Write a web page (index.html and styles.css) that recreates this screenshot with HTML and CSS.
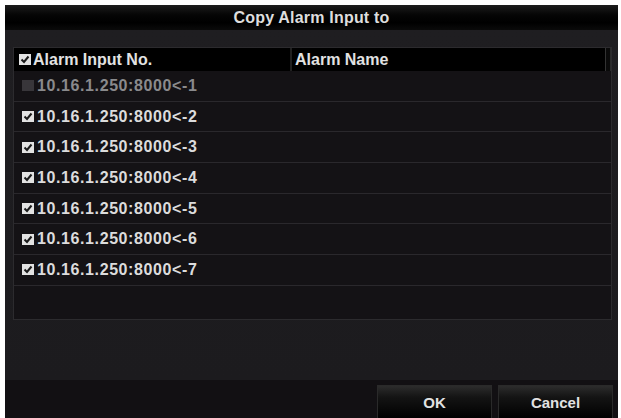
FILE: index.html
```html
<!DOCTYPE html>
<html>
<head>
<meta charset="utf-8">
<link rel="stylesheet" href="styles.css">
</head>
<body>
<div class="dialog">
  <div class="title">Copy Alarm Input to</div>
  <div class="content">
    <div class="table">
      <div class="thead">
        <div class="th c1"><span class="cb on"><svg viewBox="0 0 12 11" width="12" height="11"><rect width="12" height="11" fill="#e2e2e2"/><path d="M2.5 5.5 L5 8 L9.5 2.5" stroke="#1a1a1a" stroke-width="2" fill="none"/></svg></span>Alarm Input No.</div>
        <div class="th c2">Alarm Name</div>
        <div class="scroll"></div>
      </div>
      <div class="row dis"><span class="cb off"></span>10.16.1.250:8000&lt;-1</div>
      <div class="row"><span class="cb on"><svg viewBox="0 0 12 11" width="12" height="11"><rect width="12" height="11" fill="#e2e2e2"/><path d="M2.5 5.5 L5 8 L9.5 2.5" stroke="#1a1a1a" stroke-width="2" fill="none"/></svg></span>10.16.1.250:8000&lt;-2</div>
      <div class="row"><span class="cb on"><svg viewBox="0 0 12 11" width="12" height="11"><rect width="12" height="11" fill="#e2e2e2"/><path d="M2.5 5.5 L5 8 L9.5 2.5" stroke="#1a1a1a" stroke-width="2" fill="none"/></svg></span>10.16.1.250:8000&lt;-3</div>
      <div class="row"><span class="cb on"><svg viewBox="0 0 12 11" width="12" height="11"><rect width="12" height="11" fill="#e2e2e2"/><path d="M2.5 5.5 L5 8 L9.5 2.5" stroke="#1a1a1a" stroke-width="2" fill="none"/></svg></span>10.16.1.250:8000&lt;-4</div>
      <div class="row"><span class="cb on"><svg viewBox="0 0 12 11" width="12" height="11"><rect width="12" height="11" fill="#e2e2e2"/><path d="M2.5 5.5 L5 8 L9.5 2.5" stroke="#1a1a1a" stroke-width="2" fill="none"/></svg></span>10.16.1.250:8000&lt;-5</div>
      <div class="row"><span class="cb on"><svg viewBox="0 0 12 11" width="12" height="11"><rect width="12" height="11" fill="#e2e2e2"/><path d="M2.5 5.5 L5 8 L9.5 2.5" stroke="#1a1a1a" stroke-width="2" fill="none"/></svg></span>10.16.1.250:8000&lt;-6</div>
      <div class="row"><span class="cb on"><svg viewBox="0 0 12 11" width="12" height="11"><rect width="12" height="11" fill="#e2e2e2"/><path d="M2.5 5.5 L5 8 L9.5 2.5" stroke="#1a1a1a" stroke-width="2" fill="none"/></svg></span>10.16.1.250:8000&lt;-7</div>
    </div>
  </div>
  <div class="footer">
    <button class="btn">OK</button>
    <button class="btn">Cancel</button>
  </div>
</div>
</body>
</html>
```
FILE: styles.css
```css
html, body {
  margin: 0;
  padding: 0;
  background: #ffffff;
}
body {
  font-family: "Liberation Sans", Arial, sans-serif;
  font-weight: bold;
}
.dialog {
  margin: 5px 3px 0 5px;
  width: 613px;
  height: 413px;
  background: #1c1b1e;
  display: flex;
  flex-direction: column;
  overflow: hidden;
}
.title {
  height: 25px;
  flex: none;
  background: linear-gradient(#1c1c1c 0%, #050505 40%, #000 70%, #0a0a0a 100%);
  color: #dedede;
  font-size: 16px;
  text-align: center;
  line-height: 25px;
  letter-spacing: 0.2px;
}
.content {
  height: 350px;
  flex: none;
  padding: 17px 6px 0 8px;
  box-sizing: border-box;
  background: linear-gradient(#1f1e21, #1c1b1e);
}
.table {
  height: 273px;
  background: #141215;
  border: 1px solid #2c2b2e;
  box-sizing: border-box;
}
.thead {
  height: 23px;
  background: #000;
  display: flex;
  color: #e2e2e2;
  font-size: 16px;
}
.th {
  display: flex;
  align-items: center;
  height: 100%;
}
.c1 {
  width: 278px;
  padding-left: 5px;
  box-sizing: border-box;
  border-right: 2px solid #202020;
}
.c2 {
  flex: 1;
  padding-left: 3px;
}
.scroll {
  width: 6px;
  border-left: 1px solid #333;
  border-right: 1px solid #2a2a2a;
  box-sizing: border-box;
  background: #0a0a0a;
}
.cb {
  display: inline-block;
  width: 12px;
  height: 11px;
  margin-right: 2px;
  flex: none;
}
.cb svg {
  display: block;
}
.cb.off {
  background: #38363a;
}
.row .cb {
  margin-right: 3px;
}
.row {
  height: 30.7px;
  box-sizing: border-box;
  border-bottom: 1px solid #2a282c;
  display: flex;
  align-items: center;
  padding-left: 8px;
  color: #dcdcdc;
  font-size: 16px;
  letter-spacing: 0.6px;
}
.row.dis {
  color: #8a8a8c;
}
.footer {
  flex: 1;
  background: #121013;
  display: flex;
  justify-content: flex-end;
  align-items: flex-end;
  gap: 6px;
  padding-right: 5px;
}
.btn {
  width: 115px;
  height: 33px;
  border: 1px solid #2a2a2a;
  border-bottom: none;
  background: linear-gradient(#2c2c2c 0%, #141414 35%, #000 100%);
  color: #e2e2e2;
  font-family: "Liberation Sans", Arial, sans-serif;
  font-weight: bold;
  font-size: 15px;
  padding: 0;
}
```
